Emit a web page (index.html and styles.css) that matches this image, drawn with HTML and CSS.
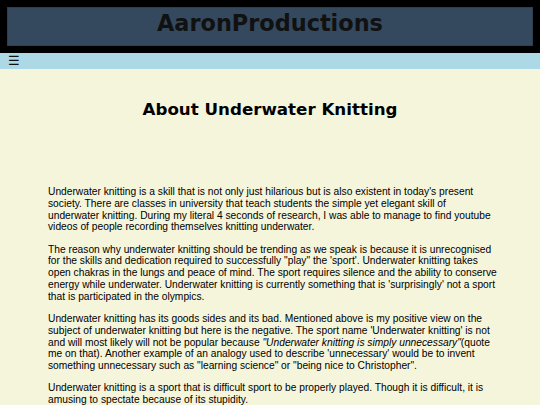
FILE: index.html
```html
<!DOCTYPE html>
<html lang="en">
<head>
<meta charset="utf-8">
<title>About Underwater Knitting</title>
<link rel="stylesheet" href="styles.css">
</head>
<body>
<header class="site-header">
  <h1 class="brand">AaronProductions</h1>
</header>
<nav class="nav-bar">
  <span class="menu-icon">&#9776;</span>
</nav>
<main class="content">
  <h2 class="page-title">About Underwater Knitting</h2>
  <p>Underwater knitting is a skill that is not only just hilarious but is also existent in today's present society. There are classes in university that teach students the simple yet elegant skill of underwater knitting. During my literal 4 seconds of research, I was able to manage to find youtube videos of people recording themselves knitting underwater.</p>
  <p>The reason why underwater knitting should be trending as we speak is because it is unrecognised for the skills and dedication required to successfully "play" the 'sport'. Underwater knitting takes open chakras in the lungs and peace of mind. The sport requires silence and the ability to conserve energy while underwater. Underwater knitting is currently something that is 'surprisingly' not a sport that is participated in the olympics.</p>
  <p>Underwater knitting has its goods sides and its bad. Mentioned above is my positive view on the subject of underwater knitting but here is the negative. The sport name 'Underwater knitting' is not and will most likely will not be popular because <em>"Underwater knitting is simply unnecessary"</em>(quote me on that). Another example of an analogy used to describe 'unnecessary' would be to invent something unnecessary such as "learning science" or "being nice to Christopher".</p>
  <p>Underwater knitting is a sport that is difficult sport to be properly played. Though it is difficult, it is amusing to spectate because of its stupidity.</p>
</main>
</body>
</html>
```
FILE: styles.css
```css
html, body {
  margin: 0;
  padding: 0;
}
body {
  background: #f5f5dc;
  font-family: "Liberation Sans", Arial, sans-serif;
  color: #000;
}
.site-header {
  background: #000;
  padding: 7px;
}
.brand {
  margin: 0;
  background: #34495e;
  border: 1px solid #2c3e50;
  height: 37px;
  line-height: 31px;
  font-family: "DejaVu Sans", sans-serif;
  font-weight: bold;
  font-size: 22.4px;
  color: #111;
  text-align: center;
}
.nav-bar {
  background: #add8e6;
  height: 16px;
  padding-left: 8px;
  display: flex;
  align-items: center;
}
.menu-icon {
  font-family: "DejaVu Sans", sans-serif;
  font-size: 13px;
  line-height: 16px;
  color: #111;
}
.content {
  padding: 0 42px 0 48px;
}
.page-title {
  margin: 30px 0 0 -6px;
  font-family: "DejaVu Sans", sans-serif;
  font-weight: bold;
  font-size: 16.7px;
  text-align: center;
}
.content p {
  font-size: 10.24px;
  line-height: 11.78px;
  margin: 10.5px 0;
}
.content p:first-of-type {
  margin-top: 67px;
}
```
